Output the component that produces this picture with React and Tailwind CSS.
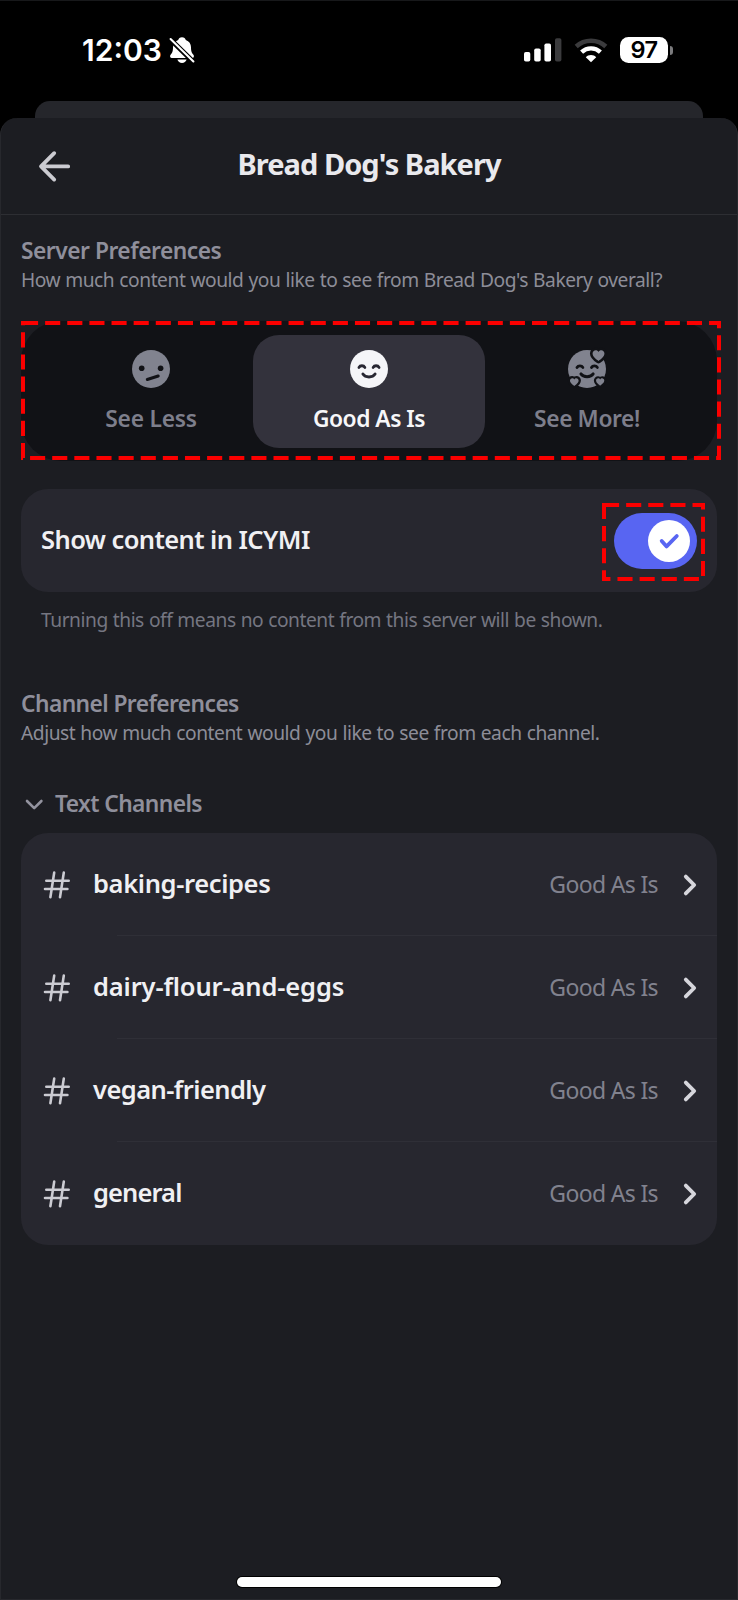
const HEART = "M12 21.5C9 19.5 1.2 14.2 1.2 8.2C1.2 4.6 3.9 2.2 6.9 2.2C9.2 2.2 11.1 3.4 12 5.4C12.9 3.4 14.8 2.2 17.1 2.2C20.1 2.2 22.8 4.6 22.8 8.2C22.8 14.2 15 19.5 12 21.5Z";

function BellOff() {
  return (
    <svg className="h-[28px] w-[26px]" viewBox="0 0 26 28" fill="none">
      <path d="M13 1.200c2.100 0 3.400 1.200 3.800 2.700 3.400 1.200 5.200 4 5.200 7.400 0 4.300.9 5.900 2.400 7.400 1.100 1.100.5 3.300-1.200 3.300H2.800c-1.700 0-2.300-2.200-1.200-3.300C3.100 17.200 4 15.600 4 11.300c0-3.400 1.800-6.200 5.200-7.400C9.600 2.400 10.900 1.200 13 1.200Z" fill="#fff" />
      <path d="M8.400 23.500h9.200c-.7 2.200-2.400 3.500-4.600 3.500s-3.900-1.300-4.600-3.500Z" fill="#fff" />
      <path d="M0 2 25.500 27" stroke="#000" strokeWidth="5" />
      <path d="M1.600 3 24.400 25.400" stroke="#fff" strokeWidth="2.100" strokeLinecap="round" />
    </svg>
  );
}

function Signal() {
  return (
    <svg className="h-[24px] w-[38px]" viewBox="0 0 38 24">
      <rect x="0" y="14" width="6.300" height="9.600" rx="1.800" fill="#fff" />
      <rect x="10.200" y="10.500" width="6.500" height="13.100" rx="1.800" fill="#fff" />
      <rect x="20.400" y="5.500" width="6.600" height="18.100" rx="1.800" fill="#fff" />
      <rect x="31" y="0.200" width="6.400" height="23.400" rx="1.800" fill="#3b3b3d" />
    </svg>
  );
}

function Wifi() {
  return (
    <svg className="h-[25px] w-[34px]" viewBox="0 0 34 25" fill="none">
      <path d="M2.200 8.500C6.300 4.700 11.400 2.700 17 2.700s10.700 2 14.800 5.800" stroke="#3b3b3d" strokeWidth="4.500" />
      <path d="M7.600 14.100c2.600-2.400 5.800-3.700 9.400-3.700s6.800 1.300 9.400 3.700" stroke="#fff" strokeWidth="4.400" />
      <path d="M17 24.300 11.800 19.200c1.300-1.300 3.100-2.100 5.200-2.100s3.900.8 5.200 2.100Z" fill="#fff" />
    </svg>
  );
}

function FaceLess() {
  return (
    <svg className="h-[38px] w-[38px]" viewBox="0 0 38 38">
      <circle cx="19" cy="19" r="19" fill="#81838f" />
      <circle cx="9.700" cy="18.300" r="2.800" fill="#111216" />
      <circle cx="28.600" cy="18.300" r="2.800" fill="#111216" />
      <path d="M15.300 29.500 26.200 26" stroke="#111216" strokeWidth="3" strokeLinecap="round" />
    </svg>
  );
}

function FaceGood() {
  return (
    <svg className="h-[38px] w-[38px]" viewBox="0 0 38 38" fill="none" stroke="#282732" strokeWidth="2.900" strokeLinecap="round">
      <circle cx="19" cy="19" r="19" fill="#f5f5f8" stroke="none" />
      <path d="M9 17.400c1.200-2.200 4.600-2.200 5.800 0M23.200 17.400c1.200-2.200 4.600-2.200 5.800 0M12.900 24c2.500 3.900 9.700 3.900 12.200 0" />
    </svg>
  );
}

function FaceMore() {
  return (
    <svg className="h-[38px] w-[38px] overflow-visible" viewBox="0 0 38 38" fill="none">
      <circle cx="19" cy="19" r="19" fill="#81838f" />
      <path d="M9 17.400c1.200-2 4.700-2 5.800 0M23.500 17.400c1.200-2 4.700-2 5.800 0M12.900 23.900c2.500 3.700 9.800 3.700 12.300 0" stroke="#111216" strokeWidth="2.900" strokeLinecap="round" />
      <g fill="#81838f" stroke="#111216" strokeLinejoin="round" paintOrder="stroke">
        <path d={HEART} transform="translate(23.900 -0.900) scale(.55)" strokeWidth="9.500" />
        <path d={HEART} transform="translate(1.500 27.300) scale(.4)" strokeWidth="11.500" />
        <path d={HEART} transform="translate(27.600 27.500) scale(.38)" strokeWidth="11.500" />
      </g>
    </svg>
  );
}

function Hash() {
  return (
    <svg className="h-[28px] w-[27px] shrink-0" viewBox="0 0 27 28" fill="none" stroke="#cbcbd2" strokeWidth="2.600" strokeLinecap="round">
      <path d="M3.300 9.800h22.400M2 18h22.400M11.200 1.600 7.400 26.200M20.800 1.600 17 26.200" />
    </svg>
  );
}

function DashedFrame({ width, height, className }) {
  return (
    <svg className={"pointer-events-none absolute " + className} width={width} height={height} fill="none">
      <rect x="2" y="2" width={width - 4} height={height - 4} stroke="#fb0000" strokeWidth="4" strokeDasharray="15.1 7.03" />
    </svg>
  );
}

const channels = [
  { name: "baking-recipes", track: "tracking-[-0.36px]" },
  { name: "dairy-flour-and-eggs", track: "tracking-[-0.14px]" },
  { name: "vegan-friendly", track: "tracking-[-0.56px]" },
  { name: "general", track: "tracking-[-0.9px]" },
];

function ChannelRow({ name, track, last }) {
  return (
    <div className="relative flex h-[103px] items-center pl-[22px] pr-[20px]">
      <Hash />
      <span className={"ml-[23px] pb-[2px] text-[25.5px] font-semibold text-[#f0f0f3] " + track}>{name}</span>
      <span className="ml-auto text-[23px] tracking-[-0.65px] text-[#81828e]">Good As Is</span>
      <svg className="ml-[25px] h-[24px] w-[14px]" viewBox="0 0 14 24" fill="none" stroke="#d6d6dc" strokeWidth="3.800" strokeLinecap="round" strokeLinejoin="round">
        <path d="M2.800 3.600 11.200 12l-8.400 8.400" />
      </svg>
      {!last && <div className="absolute bottom-0 left-[96px] right-0 h-px bg-[#2f2f37]" />}
    </div>
  );
}

export default function App() {
  return (
    <div className="flex h-[1600px] w-[738px] flex-col bg-black font-['Noto_Sans',sans-serif] whitespace-nowrap">
      <div className="flex h-[101px] shrink-0 items-center border-t border-[#17181a] pl-[82px] pr-[64px] text-white">
        <span className="-mt-[2px] font-['Inter',sans-serif] text-[30px] font-semibold leading-[40px] tracking-[0px]">12:03</span>
        <div className="-mt-[2px] ml-[7px]"><BellOff /></div>
        <div className="-mt-[2px] ml-auto flex items-center">
          <Signal />
          <div className="ml-[12px]"><Wifi /></div>
          <div className="ml-[12px] flex h-[26px] w-[48px] items-center justify-center rounded-[8.5px] bg-white font-['Inter',sans-serif] text-[23.5px] font-semibold tracking-[-0.5px] text-black">97</div>
          <div className="ml-[2px] mr-[1px] h-[9px] w-[3px] rounded-r-full bg-[#7b7b7d]" />
        </div>
      </div>

      <div className="mx-[35px] h-[17px] shrink-0 rounded-t-[15px] bg-[#25262b]" />

      <div className="flex min-h-0 flex-1 flex-col rounded-t-[17px] border-x border-b border-[#27282d] border-t-0 bg-[#1c1d22]">
        <header className="relative flex h-[97px] shrink-0 items-center justify-center border-b border-[#2d2e33] pb-[5px]">
          <svg className="absolute left-[36px] top-[31px] h-[34px] w-[36px]" viewBox="0 0 36 34" fill="none" stroke="#cbcbd1" strokeWidth="3.800" strokeLinecap="round" strokeLinejoin="round">
            <path d="M17.200 4.200 4 17.400l13.200 13.200M4.500 17.400h26.700" />
          </svg>
          <h1 className="text-[29px] font-bold leading-[40px] tracking-[-0.95px] text-[#e9e9ed]">Bread Dog's Bakery</h1>
        </header>

        <main className="flex flex-1 flex-col px-[20px] pt-[22px]">
          <h2 className="text-[22.8px] font-semibold leading-[28px] tracking-[-0.5px] text-[#8f8f9b]">Server Preferences</h2>
          <p className="mt-[1px] text-[19.2px] leading-[28px] tracking-[-0.45px] text-[#8d8d98] [word-spacing:0.5px]">How much content would you like to see from Bread Dog's Bakery overall?</p>

          <div className="relative mt-[27px] flex h-[140px] w-[696px] rounded-[40px] bg-[#111216] px-[28px] pt-[14px]">
            <div className="flex h-[113px] w-[204px] flex-col items-center pt-[15px]">
              <FaceLess />
              <span className="mt-[17px] text-[22.8px] font-semibold leading-[28px] tracking-[-0.25px] text-[#7d7e8b]">See Less</span>
            </div>
            <div className="flex h-[113px] w-[232px] flex-col items-center rounded-[26px] bg-[#33323c] pt-[15px]">
              <FaceGood />
              <span className="mt-[17px] text-[22.8px] font-semibold leading-[28px] tracking-[-0.5px] text-[#f7f7f9]">Good As Is</span>
            </div>
            <div className="flex h-[113px] w-[204px] flex-col items-center pt-[15px]">
              <FaceMore />
              <span className="mt-[17px] text-[22.8px] font-semibold leading-[28px] tracking-[-0.4px] text-[#7d7e8b]">See More!</span>
            </div>
            <DashedFrame width={700} height={139} className="left-0 top-0" />
          </div>

          <div className="relative mt-[28px] flex h-[103px] w-[696px] items-center justify-between rounded-[27px] bg-[#27272f] pl-[20px] pr-[20px]">
            <span className="pb-[2px] text-[25.5px] font-semibold tracking-[-0.58px] text-[#f0f0f3]">Show content in ICYMI</span>
            <div className="flex h-[56px] w-[83px] items-center justify-end rounded-full bg-[#5865f2] pr-[7px]">
              <div className="flex h-[42px] w-[42px] items-center justify-center rounded-full bg-white">
                <svg className="h-[20px] w-[24px]" viewBox="0 0 24 20" fill="none" stroke="#5865f2" strokeWidth="3.800" strokeLinecap="round" strokeLinejoin="round">
                  <path d="m4.700 9.900 4.900 5.500L19.800 5" />
                </svg>
              </div>
            </div>
            <DashedFrame width={103} height={78} className="left-[581px] top-[14px]" />
          </div>
          <p className="mt-[14px] pl-[20px] text-[19.2px] leading-[28px] tracking-[-0.46px] text-[#757681] [word-spacing:0.5px]">Turning this off means no content from this server will be shown.</p>

          <h2 className="mt-[56px] text-[22.8px] font-semibold leading-[28px] tracking-[-0.6px] text-[#8f8f9b]">Channel Preferences</h2>
          <p className="mt-[1px] text-[19.2px] leading-[28px] tracking-[-0.45px] text-[#8d8d98] [word-spacing:0.5px]">Adjust how much content would you like to see from each channel.</p>

          <div className="mt-[41px] flex items-center pl-[3px]">
            <svg className="mt-[3px] h-[14px] w-[20px]" viewBox="0 0 20 14" fill="none" stroke="#93939f" strokeWidth="2.600" strokeLinecap="round" strokeLinejoin="round">
              <path d="M3 3 10.200 10.200 17.400 3" />
            </svg>
            <span className="ml-[11px] pt-[2px] text-[22.8px] font-semibold leading-[28px] tracking-[-0.6px] text-[#8f8f9b]">Text Channels</span>
          </div>

          <div className="mt-[15px] w-[696px] rounded-[27px] bg-[#27272f]">
            {channels.map((c, i) => (
              <ChannelRow key={c.name} name={c.name} track={c.track} last={i === channels.length - 1} />
            ))}
          </div>

          <div className="mb-[12px] mt-auto h-[10px] w-[264px] self-center rounded-full bg-white ring-1 ring-black" />
        </main>
      </div>
    </div>
  );
}
